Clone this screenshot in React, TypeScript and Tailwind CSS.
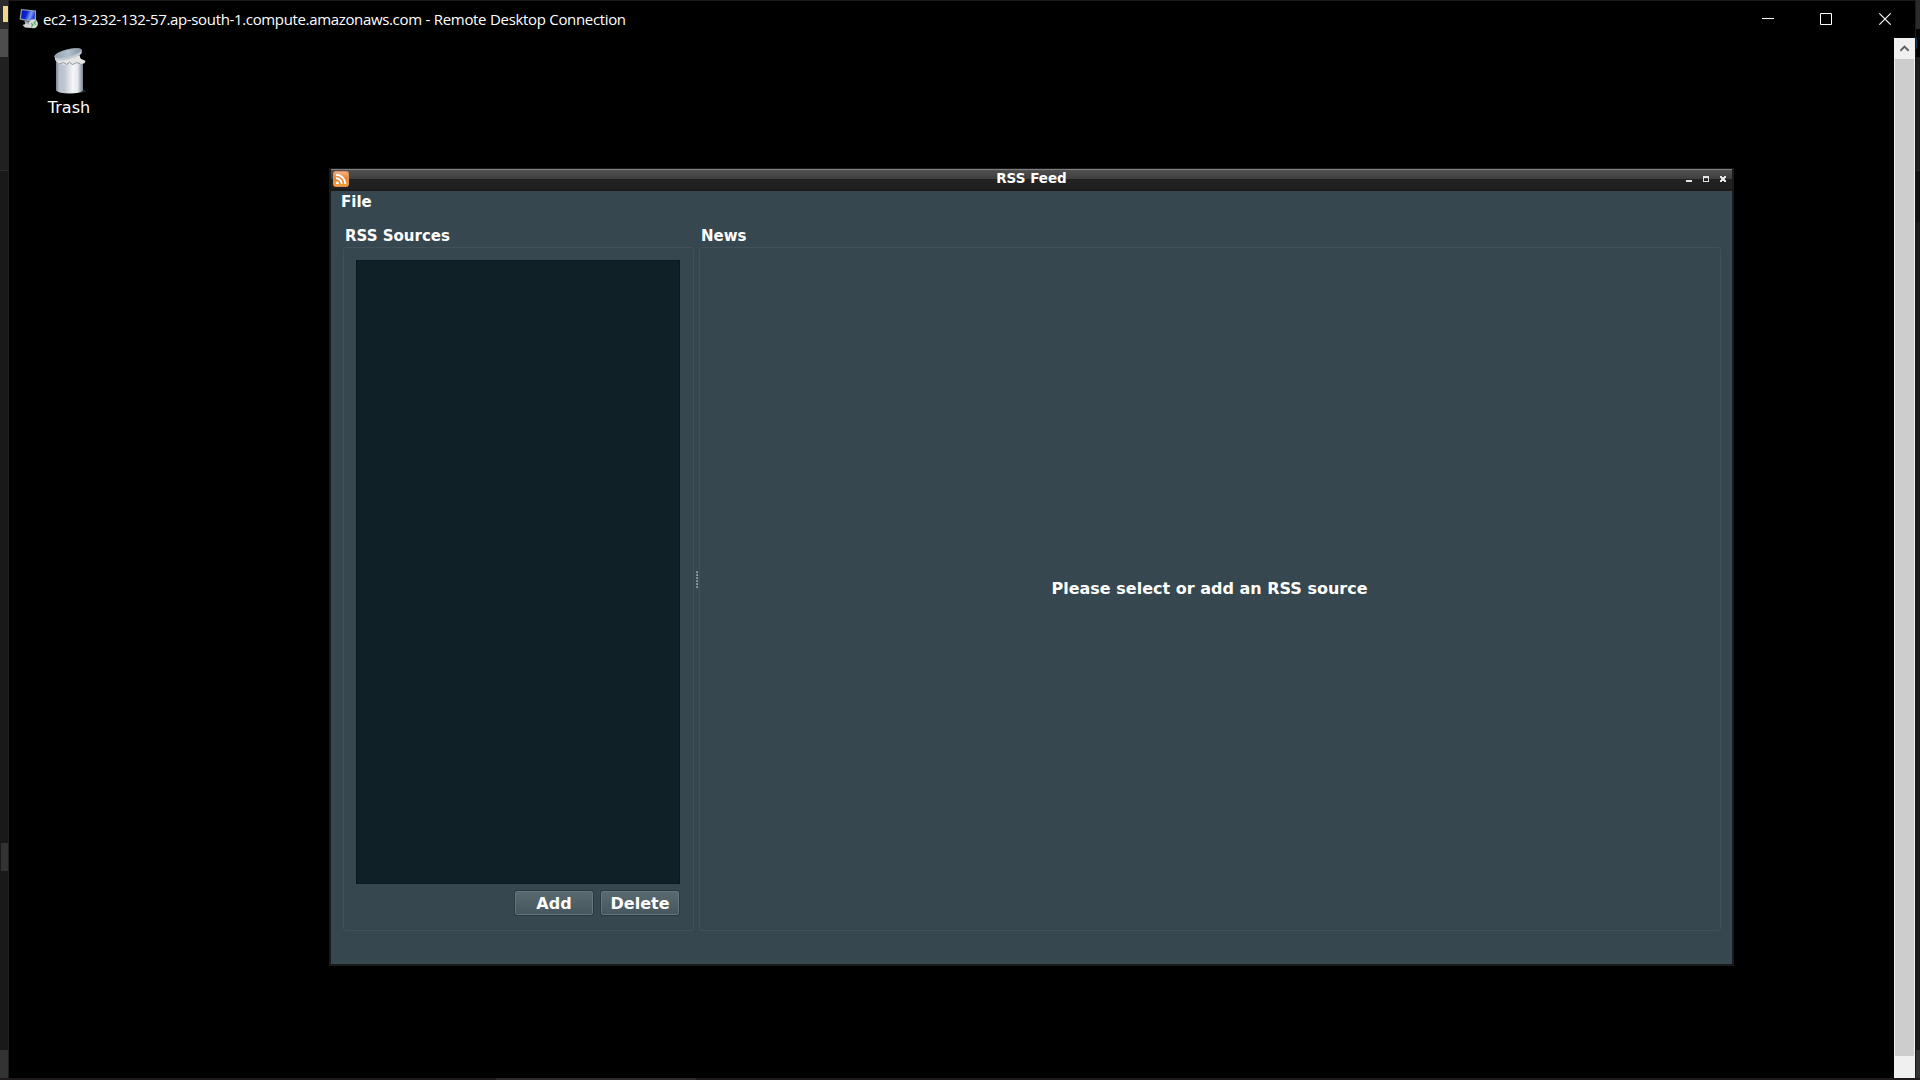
import React from "react";

function ComputerIcon() {
  return (
    <svg width="20" height="20" viewBox="0 0 20 20" className="block">
      <defs>
        <linearGradient id="scr" x1="0" y1="0" x2="1" y2="0.3">
          <stop offset="0" stopColor="#0a12a8" />
          <stop offset="0.45" stopColor="#0b22d8" />
          <stop offset="0.75" stopColor="#7f9cf5" />
          <stop offset="1" stopColor="#1f3fd0" />
        </linearGradient>
      </defs>
      <path d="M2 0 L17 1.5 L17 12 L15 13.5 L0.5 10.5 Z" fill="#9a9eaa" />
      <path d="M3 1.2 L16 2.4 L15.6 12 L2 9.6 Z" fill="url(#scr)" />
      <path d="M5.5 11.8 L11 13 L11 15.5 L6 15 Z" fill="#9da3ad" />
      <path d="M3.5 16 L8 14.5 L13 16.5 L12 19 L6 18.6 Z" fill="#d2d5da" />
      <circle cx="14.4" cy="14.8" r="4.5" fill="#d3d8d3" />
      <path d="M12 14.5 L14 15.7 L12.4 17.8 M17 12 L15 14 L16.8 15.6" stroke="#4fa862" strokeWidth="1.1" fill="none" />
    </svg>
  );
}

function TrashIcon() {
  return (
    <svg width="34" height="48" viewBox="-0.5 0 34 48" className="block shrink-0">
      <defs>
        <linearGradient id="can" x1="0" y1="0" x2="1" y2="0">
          <stop offset="0" stopColor="#7b8591" />
          <stop offset="0.12" stopColor="#b9c1cc" />
          <stop offset="0.3" stopColor="#bdc5cf" />
          <stop offset="0.62" stopColor="#f4f6f8" />
          <stop offset="0.8" stopColor="#e6eaee" />
          <stop offset="1" stopColor="#78828d" />
        </linearGradient>
        <linearGradient id="lid" x1="0" y1="0" x2="1" y2="0">
          <stop offset="0" stopColor="#93a0ae" />
          <stop offset="0.5" stopColor="#b3bfcc" />
          <stop offset="1" stopColor="#8492a1" />
        </linearGradient>
      </defs>
      <ellipse cx="26" cy="43" rx="7" ry="2" fill="#20282d" />
      <path d="M3.5 13 L30.5 13 L30.5 42.5 Q28 45.5 17 45.5 Q6 45.5 3.5 42.5 Z" fill="url(#can)" />
      <path d="M2.5 11 L27 7 L28 10.5 L33 13 L32 15.3 L27 16.2 L24 14.8 L20 17 L16 15 L12 17.2 L8 16 L4 13.5 Z" fill="#e4e6e6" />
      <path d="M7 15.8 L11 14.6 L14 16.4 L17 14.4 L20 16.6 L24 14.6 L28 15.8" stroke="#848c92" strokeWidth="0.9" fill="none" />
      <path d="M2.2 8.5 L29 1.5 L29.3 5.2 C26 9.5 8 14.5 2.6 12.2 Z" fill="#c3ccd5" />
      <ellipse cx="15.6" cy="5.3" rx="13.8" ry="3.7" transform="rotate(-14 15.6 5.3)" fill="url(#lid)" stroke="#b7c1cb" strokeWidth="0.6" />
    </svg>
  );
}

function RssIcon() {
  return (
    <svg width="16" height="16" viewBox="0 0 16 16" className="block">
      <defs>
        <linearGradient id="rss" x1="0" y1="0" x2="0" y2="1">
          <stop offset="0" stopColor="#efb187" />
          <stop offset="0.5" stopColor="#e98231" />
          <stop offset="1" stopColor="#f0a035" />
        </linearGradient>
      </defs>
      <rect x="0.5" y="0.5" width="15" height="15" rx="2" fill="url(#rss)" stroke="#dd9258" />
      <circle cx="4.3" cy="11.8" r="1.5" fill="#fff" />
      <path d="M3 7.3 A5.8 5.8 0 0 1 8.8 13.1 M3 3.8 A9.3 9.3 0 0 1 12.3 13.1" stroke="#fff" strokeWidth="1.9" fill="none" />
    </svg>
  );
}

function LeftEdge() {
  return (
    <div className="flex w-[9px] shrink-0 flex-col border-r border-[#1f1f1f] bg-[#191919]">
      <div className="h-[29px] bg-[#2b2b2b] pt-1.5 pl-[3px]">
        <div className="h-4 w-[5px] bg-[#f0d58a]" />
      </div>
      <div className="h-7 bg-[#4d4d4d]" />
      <div className="h-[113px] bg-[#202020]" />
      <div className="h-px bg-[#2e2e2e]" />
      <div className="h-[672px]" />
      <div className="ml-px h-7 bg-[#333333]" />
      <div className="h-[179px]" />
      <div className="h-7 bg-[#333333]" />
    </div>
  );
}

function RightEdge() {
  return (
    <div className="flex w-[5px] shrink-0 flex-col border-l border-[#1a1a1a] bg-[#1b1b1b]">
      <div className="h-[29px] bg-[#2b2b2b]" />
      <div className="h-7 bg-black pt-2">
        <div className="h-3 w-px bg-[#0b2f4f]" />
      </div>
      <div className="h-[113px] bg-[#1d1d1d]" />
      <div className="h-px bg-[#2b2b2b]" />
      <div className="h-[51px] bg-[#111111]" />
      <div className="h-[828px]" />
      <div className="h-7 bg-[#333333]" />
    </div>
  );
}

function TitleBar() {
  return (
    <header className="flex h-[37px] shrink-0 items-center pb-0.5 text-white">
      <div className="ml-2.5 mt-px">
        <ComputerIcon />
      </div>
      <h1 className="ml-1 flex-1 whitespace-nowrap font-['Open_Sans',sans-serif] text-[15px] leading-5 tracking-[-0.345px] [word-spacing:0.3px]">
        ec2-13-232-132-57.ap-south-1.compute.amazonaws.com - Remote Desktop Connection
      </h1>
      <svg width="130" height="13" viewBox="0 0 130 13" className="mr-[23px] block" stroke="#fff" fill="none">
        <path d="M0 6.5H12" />
        <path d="M58.5 1.5h11v11h-11z" />
        <path d="M117.3 1.3L128.7 12.7M128.7 1.3L117.3 12.7" strokeWidth="1.1" />
      </svg>
    </header>
  );
}

function Scrollbar() {
  return (
    <div className="flex w-[21px] shrink-0 flex-col bg-[#f0f0f0]">
      <div className="flex h-[21px] items-center justify-center">
        <svg width="9" height="7" viewBox="0 0 9 7" fill="none" stroke="#606060" strokeWidth="2">
          <path d="M0.3 5.8L4.5 1.6L8.7 5.8" />
        </svg>
      </div>
      <div className="mx-px h-[997px] bg-[#cdcdcd]" />
    </div>
  );
}

function Button({ children }: { children: React.ReactNode }) {
  return (
    <button className="h-[26px] w-20 rounded-[3px] border border-[#2b383e] bg-linear-to-b from-[#5a6a71] to-[#46565d] text-[16px] leading-[23px] font-bold shadow-[inset_0_0_0_1px_#65757c]">
      {children}
    </button>
  );
}

function RssWindow() {
  return (
    <section className="mt-[44px] ml-[320px] flex h-[798px] w-[1405px] flex-col border-2 border-t border-[#1a1a1a] bg-[#37474f] font-['DejaVu_Sans',sans-serif] font-bold text-white">
      <div className="grid h-[22px] shrink-0 grid-cols-[60px_1fr_60px] border-t border-b-2 border-t-[#808080] border-b-[#1a1a1a] bg-[linear-gradient(#505050_0px,#3e3e3e_9px,#222222_9px,#202020_100%)]">
        <div className="pt-px pl-0.5">
          <RssIcon />
        </div>
        <div className="text-center text-[13.5px] leading-4">RSS Feed</div>
        <svg width="60" height="18" viewBox="0 0 60 18" className="block" fill="#e4e4e0">
          <path d="M14 10h6v2h-6z" />
          <path d="M31 6h6v6h-6zM32 8v3h4v-3z" fillRule="evenodd" />
          <path d="M48 6h2v1h2v-1h2v2h-1v2h1v2h-2v-1h-2v1h-2v-2h1v-2h-1z" />
        </svg>
      </div>
      <div className="h-5 shrink-0 pt-px pl-[10px] text-[15px] leading-5">File</div>
      <div className="flex flex-1 pt-3 pr-[11px] pb-[33px] pl-3">
        <div className="flex w-[351px] flex-col">
          <h2 className="h-6 pt-px pl-0.5 text-[15px] leading-6">RSS Sources</h2>
          <div className="flex-1 rounded-[3px] border border-[#435259] pt-3 pr-3 pl-3">
            <div className="h-[624px] w-[324px] border border-[#0b191f] bg-[#102027]" />
            <div className="mt-1.5 flex justify-end gap-1.5 pr-px">
              <Button>Add</Button>
              <Button>Delete</Button>
            </div>
          </div>
        </div>
        <div className="flex w-[5px] flex-col items-center justify-center gap-px pt-1">
          {[0, 1, 2, 3, 4, 5].map((i) => (
            <div key={i} className="size-0.5 border-t border-l border-[#7f8b90] bg-[#a4adb1]" />
          ))}
        </div>
        <div className="flex flex-1 flex-col">
          <h2 className="h-6 pt-px pl-0.5 text-[15px] leading-6">News</h2>
          <div className="flex flex-1 items-center justify-center rounded-[3px] border border-[#435259] pr-px text-[16px]">
            Please select or add an RSS source
          </div>
        </div>
      </div>
    </section>
  );
}

export default function App() {
  return (
    <div className="flex h-[1080px] w-[1920px] flex-col overflow-hidden bg-black">
      <div className="flex h-[1078px] shrink-0">
        <LeftEdge />
        <main className="flex flex-1 flex-col border-t border-[#1a1a1a]">
          <TitleBar />
          <div className="flex flex-1">
            <div className="flex-1 pt-2.5">
              <div className="ml-[26px] flex h-[76px] w-[68px] flex-col items-center gap-0.5 text-center font-['DejaVu_Sans',sans-serif] text-[16px] leading-5 text-white">
                <TrashIcon />
                <span>Trash</span>
              </div>
              <RssWindow />
            </div>
            <Scrollbar />
          </div>
        </main>
        <RightEdge />
      </div>
      <div className="flex h-0.5 bg-[#1e1a1b]">
        <div className="ml-[496px] w-[200px] bg-[#302c2d]" />
      </div>
    </div>
  );
}
